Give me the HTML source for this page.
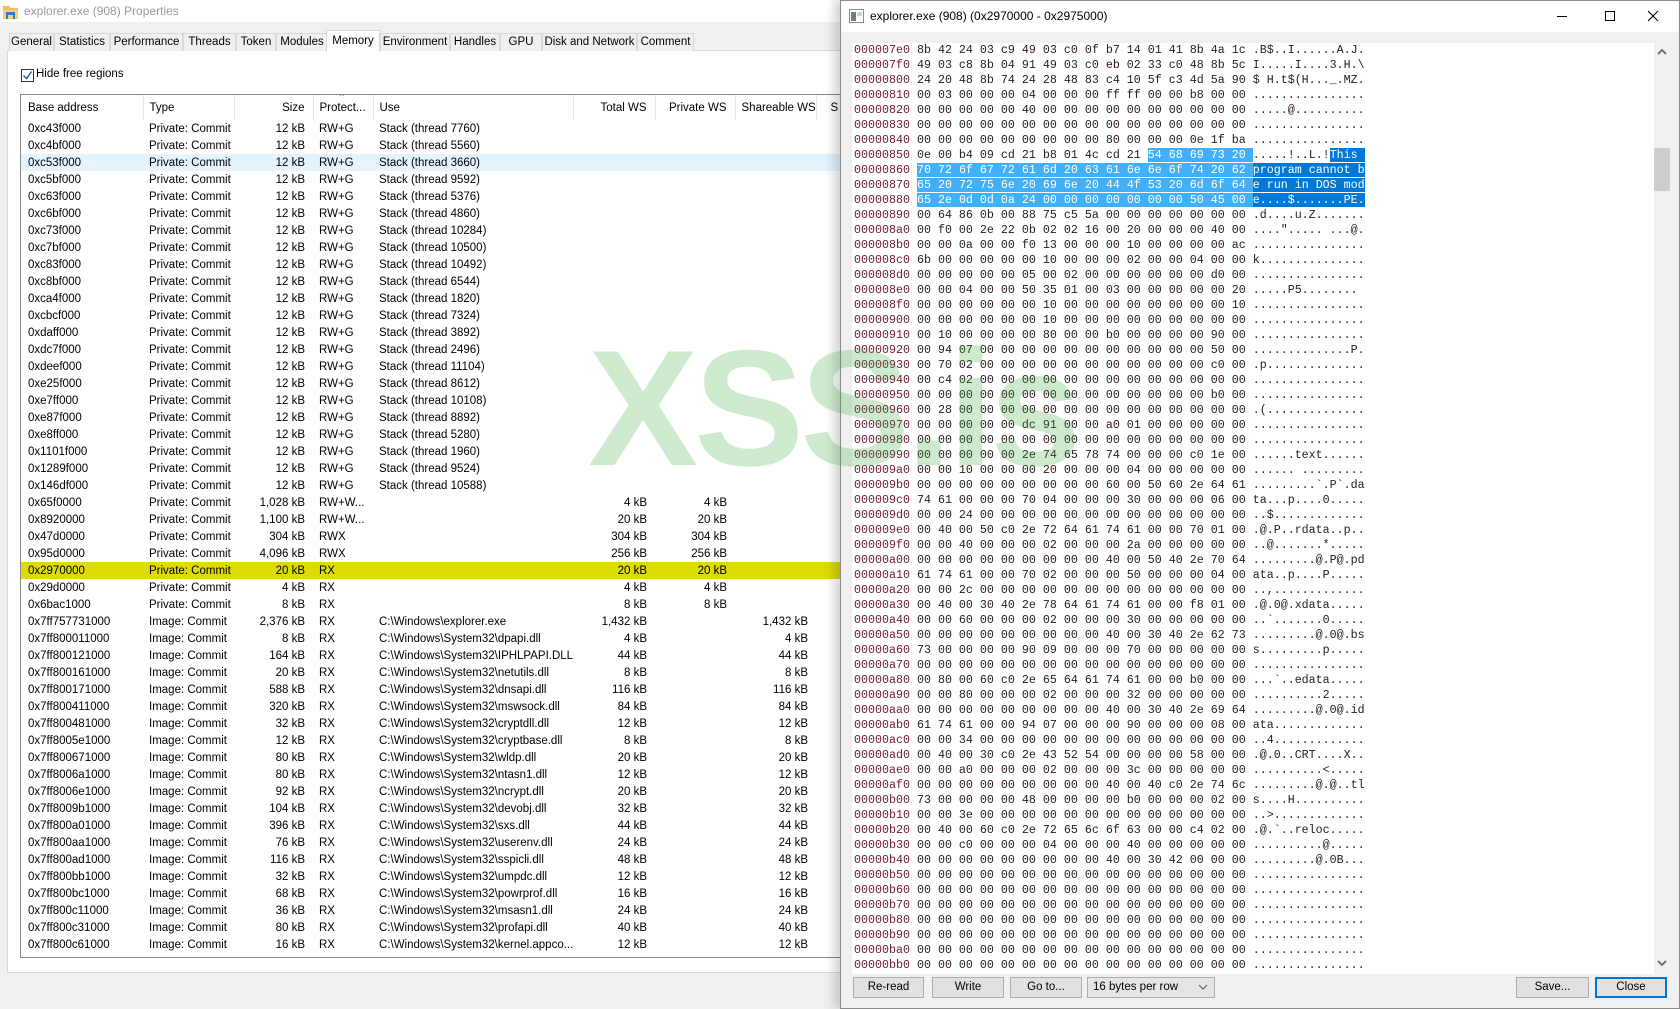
<!DOCTYPE html>
<html><head><meta charset="utf-8">
<style>
*{margin:0;padding:0;box-sizing:border-box}
body{width:1680px;height:1009px;overflow:hidden;background:#f0f0f0;font-family:"Liberation Sans",sans-serif;font-size:12px;color:#000;position:relative}
.a{position:absolute}
#ltitle{left:0;top:0;width:840px;height:22px;background:#fff}
#ltitle span{position:absolute;left:24px;top:4px;font-size:12px;color:#9a9a9a}
.tab{position:absolute;top:33px;height:18px;border:1px solid #d9d9d9;border-bottom:none;background:#f0f0f0;font-size:11.5px;line-height:16px;text-align:center}
.tab.sel{top:30px;height:22px;background:#fff;z-index:2}
#panel{left:7px;top:50px;width:900px;height:923px;background:#fff;border:1px solid #d9d9d9}
#list{left:20px;top:94px;width:830px;height:864px;border:1px solid #828790;background:#fff;overflow:hidden}
table{border-collapse:collapse;table-layout:fixed;width:980px;font-size:11.5px}
td,th{height:17px;padding:0 6px;white-space:nowrap;overflow:hidden;font-weight:normal;text-align:left}
th{height:25px;border-right:1px solid #e5e5e5;position:relative}
td:first-child,th:first-child{padding-left:7px}
td:nth-child(3),td:nth-child(6),td:nth-child(7),td:nth-child(8),th:nth-child(3),th:nth-child(6),th:nth-child(7),th:nth-child(8){text-align:right;padding-right:8px}
th:nth-child(9){padding-left:14px}
tr.hv td{background:#e5f3ff}
tr.y td{background:#dcdc00}
#hw{left:840px;top:0;width:840px;height:1009px;background:#f0f0f0;border:1px solid #8a8a8a;box-shadow:-6px 0 10px rgba(0,0,0,.18)}
#htitle{left:0;top:0;width:838px;height:31px;background:#fff}
#hex{left:11px;top:42px;width:802px;height:931px;background:#fff;overflow:hidden;font-family:"Liberation Mono",monospace;font-size:11.67px;color:#2a1a1a}
#hex div{height:15px;line-height:15px;white-space:pre;padding-left:2px}
#hex b{font-weight:normal;color:#6a1a30}
.h{background:#40b0fa;color:#fff}
.d{background:#0078d7;color:#fff}
.btn{position:absolute;top:977px;height:21px;background:#e1e1e1;border:1px solid #adadad;font-size:11.5px;line-height:19px;text-align:center}
#wm{left:588px;top:326px;font:bold 165px/1 "Liberation Sans",sans-serif;letter-spacing:-4px;color:rgba(60,170,60,.25);z-index:50;white-space:nowrap}
</style></head><body>
<div class="a" id="ltitle">
<svg class="a" style="left:2px;top:4px" width="17" height="16" viewBox="0 0 17 16"><path d="M1 2h6l2 2h7v11H1z" fill="#f4c246"/><rect x="1" y="6" width="15" height="9" fill="#f8d36a"/><rect x="4" y="8" width="9" height="7" fill="#2b7bd6"/><rect x="6" y="11" width="5" height="4" fill="#f8d36a"/></svg>
<span>explorer.exe (908) Properties</span></div>
<div class="a" id="panel"></div>
<div class="tab" style="left:9px;width:45px">General</div>
<div class="tab" style="left:54px;width:56px">Statistics</div>
<div class="tab" style="left:110px;width:73px">Performance</div>
<div class="tab" style="left:183px;width:53px">Threads</div>
<div class="tab" style="left:236px;width:40px">Token</div>
<div class="tab" style="left:276px;width:52px">Modules</div>
<div class="tab sel" style="left:326px;width:54px;line-height:20px">Memory</div>
<div class="tab" style="left:380px;width:70px">Environment</div>
<div class="tab" style="left:450px;width:50px">Handles</div>
<div class="tab" style="left:500px;width:42px">GPU</div>
<div class="tab" style="left:542px;width:95px">Disk and Network</div>
<div class="tab" style="left:637px;width:57px">Comment</div>
<div class="a" style="left:21px;top:69px;width:13px;height:13px;border:1px solid #333;background:#fff"><svg width="11" height="11" style="display:block"><path d="M1.5 5.5l3 3 5-7" stroke="#1a5aa8" stroke-width="1.4" fill="none"/></svg></div>
<div class="a" style="left:36px;top:68px;font-size:11.5px">Hide free regions</div>
<div class="a" id="list">
<table>
<colgroup><col style="width:122px"><col style="width:91px"><col style="width:79px"><col style="width:60px"><col style="width:200px"><col style="width:82px"><col style="width:80px"><col style="width:81px"><col style="width:185px"></colgroup>
<tr><th>Base address</th><th>Type</th><th>Size</th><th>Protect...<span class="a" style="left:26px;top:-4px;font-size:9px;color:#666">^</span></th><th>Use</th><th>Total WS</th><th>Private WS</th><th>Shareable WS</th><th>S</th></tr>
<tr><td>0xc43f000<td>Private: Commit<td>12 kB<td>RW+G<td>Stack (thread 7760)<td><td><td><td>
<tr><td>0xc4bf000<td>Private: Commit<td>12 kB<td>RW+G<td>Stack (thread 5560)<td><td><td><td>
<tr class="hv"><td>0xc53f000<td>Private: Commit<td>12 kB<td>RW+G<td>Stack (thread 3660)<td><td><td><td>
<tr><td>0xc5bf000<td>Private: Commit<td>12 kB<td>RW+G<td>Stack (thread 9592)<td><td><td><td>
<tr><td>0xc63f000<td>Private: Commit<td>12 kB<td>RW+G<td>Stack (thread 5376)<td><td><td><td>
<tr><td>0xc6bf000<td>Private: Commit<td>12 kB<td>RW+G<td>Stack (thread 4860)<td><td><td><td>
<tr><td>0xc73f000<td>Private: Commit<td>12 kB<td>RW+G<td>Stack (thread 10284)<td><td><td><td>
<tr><td>0xc7bf000<td>Private: Commit<td>12 kB<td>RW+G<td>Stack (thread 10500)<td><td><td><td>
<tr><td>0xc83f000<td>Private: Commit<td>12 kB<td>RW+G<td>Stack (thread 10492)<td><td><td><td>
<tr><td>0xc8bf000<td>Private: Commit<td>12 kB<td>RW+G<td>Stack (thread 6544)<td><td><td><td>
<tr><td>0xca4f000<td>Private: Commit<td>12 kB<td>RW+G<td>Stack (thread 1820)<td><td><td><td>
<tr><td>0xcbcf000<td>Private: Commit<td>12 kB<td>RW+G<td>Stack (thread 7324)<td><td><td><td>
<tr><td>0xdaff000<td>Private: Commit<td>12 kB<td>RW+G<td>Stack (thread 3892)<td><td><td><td>
<tr><td>0xdc7f000<td>Private: Commit<td>12 kB<td>RW+G<td>Stack (thread 2496)<td><td><td><td>
<tr><td>0xdeef000<td>Private: Commit<td>12 kB<td>RW+G<td>Stack (thread 11104)<td><td><td><td>
<tr><td>0xe25f000<td>Private: Commit<td>12 kB<td>RW+G<td>Stack (thread 8612)<td><td><td><td>
<tr><td>0xe7ff000<td>Private: Commit<td>12 kB<td>RW+G<td>Stack (thread 10108)<td><td><td><td>
<tr><td>0xe87f000<td>Private: Commit<td>12 kB<td>RW+G<td>Stack (thread 8892)<td><td><td><td>
<tr><td>0xe8ff000<td>Private: Commit<td>12 kB<td>RW+G<td>Stack (thread 5280)<td><td><td><td>
<tr><td>0x1101f000<td>Private: Commit<td>12 kB<td>RW+G<td>Stack (thread 1960)<td><td><td><td>
<tr><td>0x1289f000<td>Private: Commit<td>12 kB<td>RW+G<td>Stack (thread 9524)<td><td><td><td>
<tr><td>0x146df000<td>Private: Commit<td>12 kB<td>RW+G<td>Stack (thread 10588)<td><td><td><td>
<tr><td>0x65f0000<td>Private: Commit<td>1,028 kB<td>RW+W...<td><td>4 kB<td>4 kB<td><td>
<tr><td>0x8920000<td>Private: Commit<td>1,100 kB<td>RW+W...<td><td>20 kB<td>20 kB<td><td>
<tr><td>0x47d0000<td>Private: Commit<td>304 kB<td>RWX<td><td>304 kB<td>304 kB<td><td>
<tr><td>0x95d0000<td>Private: Commit<td>4,096 kB<td>RWX<td><td>256 kB<td>256 kB<td><td>
<tr class="y"><td>0x2970000<td>Private: Commit<td>20 kB<td>RX<td><td>20 kB<td>20 kB<td><td>
<tr><td>0x29d0000<td>Private: Commit<td>4 kB<td>RX<td><td>4 kB<td>4 kB<td><td>
<tr><td>0x6bac1000<td>Private: Commit<td>8 kB<td>RX<td><td>8 kB<td>8 kB<td><td>
<tr><td>0x7ff757731000<td>Image: Commit<td>2,376 kB<td>RX<td>C:\Windows\explorer.exe<td>1,432 kB<td><td>1,432 kB<td>
<tr><td>0x7ff800011000<td>Image: Commit<td>8 kB<td>RX<td>C:\Windows\System32\dpapi.dll<td>4 kB<td><td>4 kB<td>
<tr><td>0x7ff800121000<td>Image: Commit<td>164 kB<td>RX<td>C:\Windows\System32\IPHLPAPI.DLL<td>44 kB<td><td>44 kB<td>
<tr><td>0x7ff800161000<td>Image: Commit<td>20 kB<td>RX<td>C:\Windows\System32\netutils.dll<td>8 kB<td><td>8 kB<td>
<tr><td>0x7ff800171000<td>Image: Commit<td>588 kB<td>RX<td>C:\Windows\System32\dnsapi.dll<td>116 kB<td><td>116 kB<td>
<tr><td>0x7ff800411000<td>Image: Commit<td>320 kB<td>RX<td>C:\Windows\System32\mswsock.dll<td>84 kB<td><td>84 kB<td>
<tr><td>0x7ff800481000<td>Image: Commit<td>32 kB<td>RX<td>C:\Windows\System32\cryptdll.dll<td>12 kB<td><td>12 kB<td>
<tr><td>0x7ff8005e1000<td>Image: Commit<td>12 kB<td>RX<td>C:\Windows\System32\cryptbase.dll<td>8 kB<td><td>8 kB<td>
<tr><td>0x7ff800671000<td>Image: Commit<td>80 kB<td>RX<td>C:\Windows\System32\wldp.dll<td>20 kB<td><td>20 kB<td>
<tr><td>0x7ff8006a1000<td>Image: Commit<td>80 kB<td>RX<td>C:\Windows\System32\ntasn1.dll<td>12 kB<td><td>12 kB<td>
<tr><td>0x7ff8006e1000<td>Image: Commit<td>92 kB<td>RX<td>C:\Windows\System32\ncrypt.dll<td>20 kB<td><td>20 kB<td>
<tr><td>0x7ff8009b1000<td>Image: Commit<td>104 kB<td>RX<td>C:\Windows\System32\devobj.dll<td>32 kB<td><td>32 kB<td>
<tr><td>0x7ff800a01000<td>Image: Commit<td>396 kB<td>RX<td>C:\Windows\System32\sxs.dll<td>44 kB<td><td>44 kB<td>
<tr><td>0x7ff800aa1000<td>Image: Commit<td>76 kB<td>RX<td>C:\Windows\System32\userenv.dll<td>24 kB<td><td>24 kB<td>
<tr><td>0x7ff800ad1000<td>Image: Commit<td>116 kB<td>RX<td>C:\Windows\System32\sspicli.dll<td>48 kB<td><td>48 kB<td>
<tr><td>0x7ff800bb1000<td>Image: Commit<td>32 kB<td>RX<td>C:\Windows\System32\umpdc.dll<td>12 kB<td><td>12 kB<td>
<tr><td>0x7ff800bc1000<td>Image: Commit<td>68 kB<td>RX<td>C:\Windows\System32\powrprof.dll<td>16 kB<td><td>16 kB<td>
<tr><td>0x7ff800c11000<td>Image: Commit<td>36 kB<td>RX<td>C:\Windows\System32\msasn1.dll<td>24 kB<td><td>24 kB<td>
<tr><td>0x7ff800c31000<td>Image: Commit<td>80 kB<td>RX<td>C:\Windows\System32\profapi.dll<td>40 kB<td><td>40 kB<td>
<tr><td>0x7ff800c61000<td>Image: Commit<td>16 kB<td>RX<td>C:\Windows\System32\kernel.appco...<td>12 kB<td><td>12 kB<td>
</table></div>

<div class="a" id="hw">
<div class="a" id="htitle">
<svg class="a" style="left:8px;top:8px" width="15" height="14" viewBox="0 0 15 14"><rect x=".5" y=".5" width="14" height="13" fill="#fff" stroke="#8a8a8a"/><rect x="2" y="3" width="5" height="9" fill="#6b7c93"/><rect x="8" y="3" width="5" height="4" fill="#c8d0dc"/></svg>
<span class="a" style="left:29px;top:8px;font-size:12px">explorer.exe (908) (0x2970000 - 0x2975000)</span>
<svg class="a" style="left:716px;top:9px" width="110" height="14"><path d="M0 6.5h10" stroke="#000"/><rect x="48.5" y="1.5" width="9" height="9" fill="none" stroke="#000"/><path d="M91 1l10 10M101 1l-10 10" stroke="#000"/></svg>
</div>
<div class="a" id="hex">
<div><b>000007e0</b> 8b 42 24 03 c9 49 03 c0 0f b7 14 01 41 8b 4a 1c .B$..I......A.J.</div>
<div><b>000007f0</b> 49 03 c8 8b 04 91 49 03 c0 eb 02 33 c0 48 8b 5c I.....I....3.H.\</div>
<div><b>00000800</b> 24 20 48 8b 74 24 28 48 83 c4 10 5f c3 4d 5a 90 $ H.t$(H..._.MZ.</div>
<div><b>00000810</b> 00 03 00 00 00 04 00 00 00 ff ff 00 00 b8 00 00 ................</div>
<div><b>00000820</b> 00 00 00 00 00 40 00 00 00 00 00 00 00 00 00 00 .....@..........</div>
<div><b>00000830</b> 00 00 00 00 00 00 00 00 00 00 00 00 00 00 00 00 ................</div>
<div><b>00000840</b> 00 00 00 00 00 00 00 00 00 80 00 00 00 0e 1f ba ................</div>
<div><b>00000850</b> 0e 00 b4 09 cd 21 b8 01 4c cd 21 <span class="h">54 68 69 73 20 </span>.....!..L.!<span class="d">This </span></div>
<div><b>00000860</b> <span class="h">70 72 6f 67 72 61 6d 20 63 61 6e 6e 6f 74 20 62 </span><span class="d">program cannot b</span></div>
<div><b>00000870</b> <span class="h">65 20 72 75 6e 20 69 6e 20 44 4f 53 20 6d 6f 64 </span><span class="d">e run in DOS mod</span></div>
<div><b>00000880</b> <span class="h">65 2e 0d 0d 0a 24 00 00 00 00 00 00 00 50 45 00 </span><span class="d">e....$.......PE.</span></div>
<div><b>00000890</b> 00 64 86 0b 00 88 75 c5 5a 00 00 00 00 00 00 00 .d....u.Z.......</div>
<div><b>000008a0</b> 00 f0 00 2e 22 0b 02 02 16 00 20 00 00 00 40 00 ....".....&#32;...@.</div>
<div><b>000008b0</b> 00 00 0a 00 00 f0 13 00 00 00 10 00 00 00 00 ac ................</div>
<div><b>000008c0</b> 6b 00 00 00 00 00 10 00 00 00 02 00 00 04 00 00 k...............</div>
<div><b>000008d0</b> 00 00 00 00 00 05 00 02 00 00 00 00 00 00 d0 00 ................</div>
<div><b>000008e0</b> 00 00 04 00 00 50 35 01 00 03 00 00 00 00 00 20 .....P5........ </div>
<div><b>000008f0</b> 00 00 00 00 00 00 10 00 00 00 00 00 00 00 00 10 ................</div>
<div><b>00000900</b> 00 00 00 00 00 00 10 00 00 00 00 00 00 00 00 00 ................</div>
<div><b>00000910</b> 00 10 00 00 00 00 80 00 00 b0 00 00 00 00 90 00 ................</div>
<div><b>00000920</b> 00 94 07 00 00 00 00 00 00 00 00 00 00 00 50 00 ..............P.</div>
<div><b>00000930</b> 00 70 02 00 00 00 00 00 00 00 00 00 00 00 c0 00 .p..............</div>
<div><b>00000940</b> 00 c4 02 00 00 00 00 00 00 00 00 00 00 00 00 00 ................</div>
<div><b>00000950</b> 00 00 00 00 00 00 00 00 00 00 00 00 00 00 b0 00 ................</div>
<div><b>00000960</b> 00 28 00 00 00 00 00 00 00 00 00 00 00 00 00 00 .(..............</div>
<div><b>00000970</b> 00 00 00 00 00 dc 91 00 00 a0 01 00 00 00 00 00 ................</div>
<div><b>00000980</b> 00 00 00 00 00 00 00 00 00 00 00 00 00 00 00 00 ................</div>
<div><b>00000990</b> 00 00 00 00 00 2e 74 65 78 74 00 00 00 c0 1e 00 ......text......</div>
<div><b>000009a0</b> 00 00 10 00 00 00 20 00 00 00 04 00 00 00 00 00 ...... .........</div>
<div><b>000009b0</b> 00 00 00 00 00 00 00 00 00 60 00 50 60 2e 64 61 .........`.P`.da</div>
<div><b>000009c0</b> 74 61 00 00 00 70 04 00 00 00 30 00 00 00 06 00 ta...p....0.....</div>
<div><b>000009d0</b> 00 00 24 00 00 00 00 00 00 00 00 00 00 00 00 00 ..$.............</div>
<div><b>000009e0</b> 00 40 00 50 c0 2e 72 64 61 74 61 00 00 70 01 00 .@.P..rdata..p..</div>
<div><b>000009f0</b> 00 00 40 00 00 00 02 00 00 00 2a 00 00 00 00 00 ..@.......*.....</div>
<div><b>00000a00</b> 00 00 00 00 00 00 00 00 00 40 00 50 40 2e 70 64 .........@.P@.pd</div>
<div><b>00000a10</b> 61 74 61 00 00 70 02 00 00 00 50 00 00 00 04 00 ata..p....P.....</div>
<div><b>00000a20</b> 00 00 2c 00 00 00 00 00 00 00 00 00 00 00 00 00 ..,.............</div>
<div><b>00000a30</b> 00 40 00 30 40 2e 78 64 61 74 61 00 00 f8 01 00 .@.0@.xdata.....</div>
<div><b>00000a40</b> 00 00 60 00 00 00 02 00 00 00 30 00 00 00 00 00 ..`.......0.....</div>
<div><b>00000a50</b> 00 00 00 00 00 00 00 00 00 40 00 30 40 2e 62 73 .........@.0@.bs</div>
<div><b>00000a60</b> 73 00 00 00 00 90 09 00 00 00 70 00 00 00 00 00 s.........p.....</div>
<div><b>00000a70</b> 00 00 00 00 00 00 00 00 00 00 00 00 00 00 00 00 ................</div>
<div><b>00000a80</b> 00 80 00 60 c0 2e 65 64 61 74 61 00 00 b0 00 00 ...`..edata.....</div>
<div><b>00000a90</b> 00 00 80 00 00 00 02 00 00 00 32 00 00 00 00 00 ..........2.....</div>
<div><b>00000aa0</b> 00 00 00 00 00 00 00 00 00 40 00 30 40 2e 69 64 .........@.0@.id</div>
<div><b>00000ab0</b> 61 74 61 00 00 94 07 00 00 00 90 00 00 00 08 00 ata.............</div>
<div><b>00000ac0</b> 00 00 34 00 00 00 00 00 00 00 00 00 00 00 00 00 ..4.............</div>
<div><b>00000ad0</b> 00 40 00 30 c0 2e 43 52 54 00 00 00 00 58 00 00 .@.0..CRT....X..</div>
<div><b>00000ae0</b> 00 00 a0 00 00 00 02 00 00 00 3c 00 00 00 00 00 ..........&lt;.....</div>
<div><b>00000af0</b> 00 00 00 00 00 00 00 00 00 40 00 40 c0 2e 74 6c .........@.@..tl</div>
<div><b>00000b00</b> 73 00 00 00 00 48 00 00 00 00 b0 00 00 00 02 00 s....H..........</div>
<div><b>00000b10</b> 00 00 3e 00 00 00 00 00 00 00 00 00 00 00 00 00 ..&gt;.............</div>
<div><b>00000b20</b> 00 40 00 60 c0 2e 72 65 6c 6f 63 00 00 c4 02 00 .@.`..reloc.....</div>
<div><b>00000b30</b> 00 00 c0 00 00 00 04 00 00 00 40 00 00 00 00 00 ..........@.....</div>
<div><b>00000b40</b> 00 00 00 00 00 00 00 00 00 40 00 30 42 00 00 00 .........@.0B...</div>
<div><b>00000b50</b> 00 00 00 00 00 00 00 00 00 00 00 00 00 00 00 00 ................</div>
<div><b>00000b60</b> 00 00 00 00 00 00 00 00 00 00 00 00 00 00 00 00 ................</div>
<div><b>00000b70</b> 00 00 00 00 00 00 00 00 00 00 00 00 00 00 00 00 ................</div>
<div><b>00000b80</b> 00 00 00 00 00 00 00 00 00 00 00 00 00 00 00 00 ................</div>
<div><b>00000b90</b> 00 00 00 00 00 00 00 00 00 00 00 00 00 00 00 00 ................</div>
<div><b>00000ba0</b> 00 00 00 00 00 00 00 00 00 00 00 00 00 00 00 00 ................</div>
<div><b>00000bb0</b> 00 00 00 00 00 00 00 00 00 00 00 00 00 00 00 00 ................</div>
</div>
<div class="a" style="left:813px;top:42px;width:16px;height:931px;background:#f0f0f0">
<svg class="a" style="left:3px;top:5px" width="10" height="8"><path d="M1 6l4-4 4 4" stroke="#606060" stroke-width="1.6" fill="none"/></svg>
<div class="a" style="left:0;top:105px;width:16px;height:43px;background:#cdcdcd"></div>
<svg class="a" style="left:3px;top:916px" width="10" height="8"><path d="M1 2l4 4 4-4" stroke="#606060" stroke-width="1.6" fill="none"/></svg>
</div>
</div>
<div class="btn" style="left:853px;width:71px;z-index:3">Re-read</div>
<div class="btn" style="left:932px;width:72px;z-index:3">Write</div>
<div class="btn" style="left:1010px;width:72px;z-index:3">Go to...</div>
<div class="btn" style="left:1087px;width:128px;z-index:3;text-align:left;padding-left:5px;background:#e5e5e5">16 bytes per row<svg class="a" style="left:110px;top:6px" width="10" height="7"><path d="M1 1l4 4 4-4" stroke="#555" fill="none"/></svg></div>
<div class="btn" style="left:1516px;width:73px;z-index:3">Save...</div>
<div class="btn" style="left:1595px;width:72px;z-index:3;border:2px solid #0078d7;line-height:17px">Close</div>
<div class="a" id="wm">XSS.is</div>
</body></html>
